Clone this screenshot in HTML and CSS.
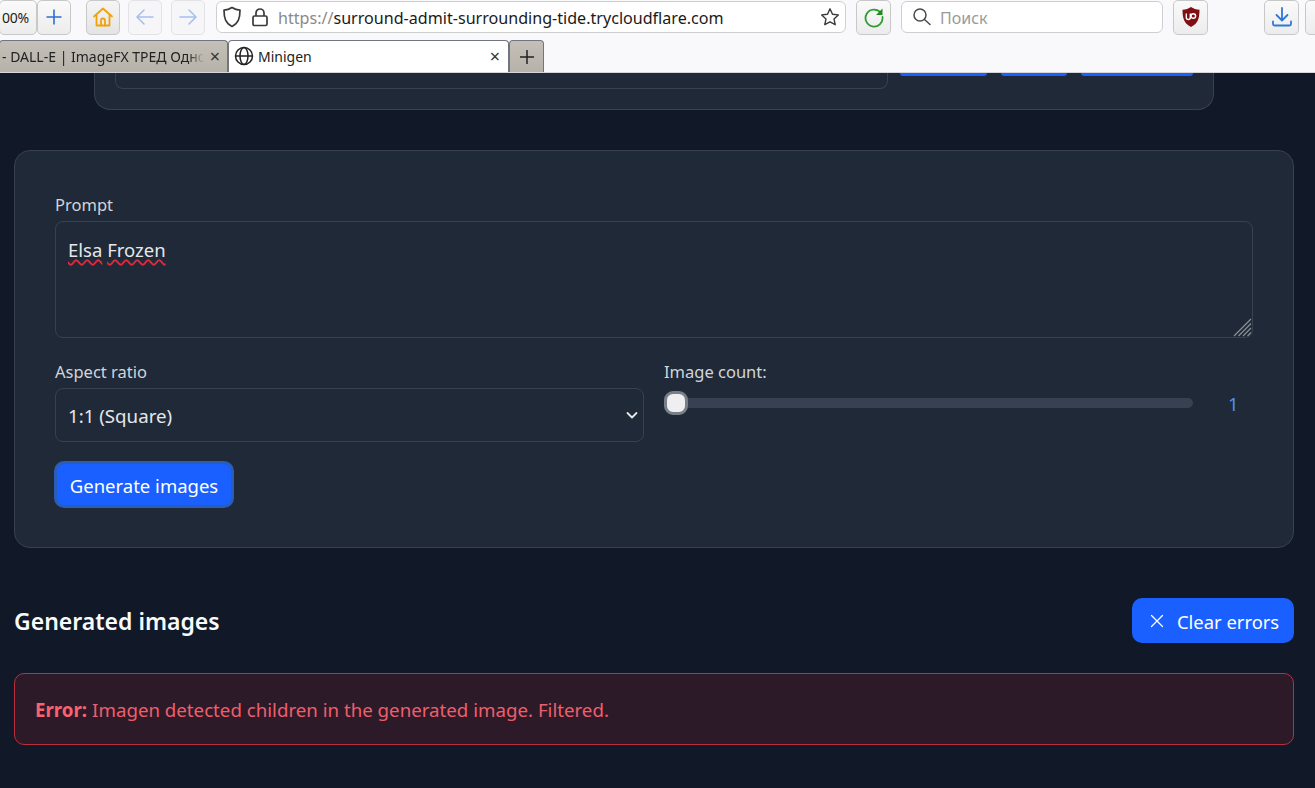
FILE: index.html
```html
<!DOCTYPE html>
<html lang="en">
<head>
<meta charset="utf-8">
<title>Minigen</title>
<link rel="stylesheet" href="styles.css">
</head>
<body>
<div class="browser">
  <div class="toolbar">
    <div class="zoom-group">
      <span class="tb-btn zoom-level"><span class="zoom-text">100%</span></span>
      <span class="tb-btn plus-btn"><svg width="20" height="20" viewBox="0 0 20 20"><path d="M10 2.500v15M2.500 10h15" stroke="#2f6fd0" stroke-width="1.600" fill="none"/></svg></span>
    </div>
    <span class="tb-btn home-btn"><svg width="22" height="22" viewBox="0 0 22 22" fill="none" stroke="#f0a30a" stroke-width="1.800" stroke-linejoin="round" stroke-linecap="round"><path d="M2 10.500 11 2.500l9 8"/><path d="M4.500 9v10.500h13V9"/><path d="M9 19.500v-5a2 2 0 0 1 4 0v5"/></svg></span>
    <span class="tb-btn nav-btn"><svg width="20" height="20" viewBox="0 0 20 20" fill="none" stroke="#a9bfee" stroke-width="1.600" stroke-linecap="round" stroke-linejoin="round"><path d="M18 10H2M9 3l-7 7 7 7"/></svg></span>
    <span class="tb-btn nav-btn"><svg width="20" height="20" viewBox="0 0 20 20" fill="none" stroke="#a9bfee" stroke-width="1.600" stroke-linecap="round" stroke-linejoin="round"><path d="M2 10h16M11 3l7 7-7 7"/></svg></span>
    <div class="urlbar">
      <svg class="shield" width="20" height="22" viewBox="0 0 20 22" fill="none" stroke="#3a3a3a" stroke-width="1.700" stroke-linejoin="round"><path d="M10 1.500c2.500 1.600 5 2.400 8 2.600 0 8-1.500 13-8 16.400C3.500 17.100 2 12.100 2 4.100c3-.2 5.500-1 8-2.600z"/></svg>
      <svg class="lock" width="18" height="20" viewBox="0 0 18 20" fill="none" stroke="#3a3a3a" stroke-width="1.700" stroke-linejoin="round"><rect x="2" y="9" width="14" height="9.500" rx="1.500"/><path d="M5 9V6a4 4 0 0 1 8 0v3"/></svg>
      <span class="url"><span class="url-scheme">https://</span>surround-admit-surrounding-tide.trycloudflare.com</span>
      <svg class="star" width="20" height="20" viewBox="0 0 20 20" fill="none" stroke="#3a3a3a" stroke-width="1.400" stroke-linejoin="round"><path d="m10 1.800 2.500 5.400 5.800.7-4.300 4 1.200 5.800L10 14.800l-5.200 2.900L6 11.900l-4.300-4 5.800-.7z"/></svg>
    </div>
    <span class="tb-btn reload-btn"><svg width="22" height="22" viewBox="0 0 22 22" fill="none"><path d="M17.500 6.500A8.500 8.500 0 1 0 19.500 11" stroke="#2f9e2f" stroke-width="1.800" stroke-linecap="round"/><path d="M19.500 2.500v6.500h-6.500z" fill="#1f8a1f"/></svg></span>
    <div class="searchbar">
      <svg width="20" height="20" viewBox="0 0 20 20" fill="none" stroke="#4a4a4a" stroke-width="1.500" stroke-linecap="round"><circle cx="8" cy="8" r="6"/><path d="m12.500 12.500 5.500 5"/></svg>
      <span class="search-placeholder">Поиск</span>
    </div>
    <span class="tb-btn ublock-btn"><svg width="20" height="22" viewBox="0 0 20 22"><path d="M10 1c2.500 1.700 5 2.500 8.500 2.700 0 8.500-1.500 13.500-8.500 17.300C3 17.200 1.500 12.200 1.500 3.700 5 3.500 7.500 2.700 10 1z" fill="#7f0f12"/><path d="M5.300 7.500v4a2 2 0 0 0 4 0v-4" fill="none" stroke="#fff" stroke-width="1.400"/><circle cx="12.300" cy="10" r="2.300" fill="none" stroke="#fff" stroke-width="1.400"/></svg></span>
    <span class="toolbar-spacer"></span>
    <span class="tb-btn download-btn"><svg width="22" height="22" viewBox="0 0 22 22" fill="none" stroke="#2f78d6" stroke-width="1.800" stroke-linecap="round" stroke-linejoin="round"><path d="M11 2v12M5.500 9l5.500 5.500L16.500 9"/><path d="M2 15.500V18a1.500 1.500 0 0 0 1.500 1.500h15A1.500 1.500 0 0 0 20 18v-2.500"/></svg></span>
    <span class="tb-btn cut-btn"></span>
  </div>
  <div class="tabstrip">
    <div class="tab tab-inactive">
      <span class="tab-title tab-title-fade">- DALL-E | ImageFX ТРЕД Одно</span>
      <span class="tab-close">×</span>
    </div>
    <div class="tab tab-active">
      <svg width="20" height="20" viewBox="0 0 20 20" fill="none" stroke="#222" stroke-width="1.500"><circle cx="10" cy="10" r="8.500"/><ellipse cx="10" cy="10" rx="4" ry="8.500"/><path d="M1.500 10h17"/></svg>
      <span class="tab-title">Minigen</span>
      <span class="tab-close">×</span>
    </div>
    <div class="tab-new"><svg width="14" height="14" viewBox="0 0 14 14"><path d="M7 0v14M0 7h14" stroke="#222" stroke-width="1.500"/></svg></div>
  </div>
</div>

<main class="page">
  <section class="top-card">
    <div class="top-row">
      <div class="top-input"></div>
      <div class="top-buttons">
        <span class="top-btn top-btn-a"></span>
        <span class="top-btn top-btn-b"></span>
        <span class="top-btn top-btn-c"></span>
      </div>
    </div>
  </section>

  <section class="card">
    <label class="label">Prompt</label>
    <div class="prompt-box">
      <span class="misspelled">Elsa</span> <span class="misspelled">Frozen</span>
      <svg class="resize-grip" width="19" height="19" viewBox="0 0 19 19" stroke="#8a8f98" stroke-width="1.200" fill="none"><path d="M1 18 18 1M5.500 18 18 5.500M10 18l8-8M14.500 18l3.500-3.500"/></svg>
    </div>
    <div class="controls">
      <div class="field">
        <label class="label">Aspect ratio</label>
        <div class="select-box">
          <span>1:1 (Square)</span>
          <svg width="14" height="14" viewBox="0 0 14 14" fill="none" stroke="#e5e7eb" stroke-width="1.800" stroke-linecap="round" stroke-linejoin="round"><path d="m2.500 5 4.500 4.500L11.500 5"/></svg>
        </div>
      </div>
      <div class="field">
        <label class="label">Image count:</label>
        <div class="slider-row">
          <div class="slider-track"><span class="slider-thumb"></span></div>
          <span class="slider-value">1</span>
        </div>
      </div>
    </div>
    <button class="primary-btn generate-btn" type="button">Generate images</button>
  </section>

  <div class="results-head">
    <h2 class="results-title">Generated images</h2>
    <button class="primary-btn clear-btn" type="button">
      <svg width="14" height="14" viewBox="0 0 14 14" fill="none" stroke="#fff" stroke-width="1.300" stroke-linecap="round"><path d="m1.500 1.500 11 11M12.500 1.500l-11 11"/></svg>
      <span>Clear errors</span>
    </button>
  </div>

  <div class="error-box"><strong>Error:</strong> Imagen detected children in the generated image. Filtered.</div>
</main>
</body>
</html>
```

FILE: styles.css
```css
* { box-sizing: border-box; }

html, body {
  margin: 0;
  height: 100%;
  overflow: hidden;
}

body {
  display: flex;
  flex-direction: column;
  background: #111827;
  font-family: "Noto Sans", "Open Sans", sans-serif;
  color: #e5e7eb;
}

.browser {
  flex: none;
  height: 73px;
  background: #f9f9fb;
  border-bottom: 1px solid #d4d6da;
  overflow: hidden;
}

.toolbar {
  display: flex;
  align-items: center;
  height: 40px;
  padding-bottom: 6px;
  gap: 10px;
}

.tb-btn {
  display: flex;
  align-items: center;
  justify-content: center;
  flex: none;
  width: 35px;
  height: 35px;
  border: 1px solid #c8c8c8;
  border-radius: 5px;
  background: linear-gradient(#fafafa, #ececec);
}

.zoom-group {
  display: flex;
  width: 71px;
  margin-right: 5px;
  flex: none;
  justify-content: flex-end;
}

.zoom-level {
  width: 38px;
  justify-content: flex-end;
  padding-right: 7px;
  overflow: hidden;
}

.zoom-text {
  flex: none;
  font-size: 14px;
  color: #222;
  letter-spacing: -0.2px;
}

.plus-btn { width: 34px; }
.home-btn { width: 34px; background: linear-gradient(#f5f5f5, #e4e4e4); }
.nav-btn { width: 34px; background: #f6f6f8; border-color: #e3e3e6; margin-left: -2px; }
.nav-btn + .nav-btn { margin-left: -1px; }

.urlbar {
  display: flex;
  align-items: center;
  width: 630px;
  height: 32px;
  margin-left: 1px;
  padding: 0 5px;
  background: #fff;
  border: 1px solid #cfcfd2;
  border-radius: 6px;
  flex: none;
}

.shield { margin-right: 9px; }
.lock { margin-right: 9px; }

.url {
  flex: 1;
  padding-top: 1px;
  font-size: 16.100px;
  color: #1a1a1a;
  white-space: nowrap;
  overflow: hidden;
}

.url-scheme { color: #8a8a8a; }

.searchbar {
  display: flex;
  align-items: center;
  gap: 8px;
  width: 262px;
  height: 32px;
  padding: 0 10px;
  flex: none;
  background: #fff;
  border: 1px solid #cfcfd2;
  border-radius: 6px;
}

.search-placeholder {
  padding-top: 1px;
  font-size: 16px;
  color: #9a9a9a;
}

.toolbar-spacer { width: 36px; flex: none; }
.cut-btn { width: 30px; margin-left: -4px; margin-right: -30px; }

.tabstrip {
  display: flex;
  align-items: stretch;
  height: 32px;
}

.tab {
  display: flex;
  align-items: center;
  gap: 4px;
  flex: none;
  padding-bottom: 1px;
  font-size: 14px;
  color: #222;
  border: 1px solid #70757e;
  border-bottom: 0;
  border-radius: 4px 4px 0 0;
}

.tab-inactive {
  width: 229px;
  padding-left: 2px;
  padding-right: 5px;
  margin-left: -1px;
  background: linear-gradient(#c4c0b8, #b6b2a9);
}

.tab-active {
  width: 281px;
  padding-left: 5px;
  padding-right: 6px;
  background: #fff;
}

.tab-title {
  flex: 1;
  white-space: nowrap;
  overflow: hidden;
}

.tab-title-fade {
  -webkit-mask-image: linear-gradient(to right, #000 92%, transparent 100%);
  mask-image: linear-gradient(to right, #000 92%, transparent 100%);
}

.tab-close {
  width: 14px;
  text-align: center;
  font-size: 18px;
  line-height: 18px;
  color: #333;
}

.tab-new {
  display: flex;
  align-items: center;
  justify-content: center;
  width: 35px;
  flex: none;
  background: linear-gradient(#c4c0b8, #b6b2a9);
  border: 1px solid #70757e;
  border-bottom: 0;
  border-radius: 4px 4px 0 0;
}

.page {
  flex: 1;
  padding: 0 21px 0 14px;
  overflow: hidden;
}

.top-card {
  height: 37px;
  margin: 0 80px 40px;
  padding: 0 20px;
  background: #1f2937;
  border: 1px solid #374151;
  border-top: 0;
  border-radius: 0 0 16px 16px;
}

.top-row {
  display: flex;
  gap: 12px;
}

.top-input {
  width: 773px;
  height: 16px;
  border: 1px solid #374151;
  border-top: 0;
  border-radius: 0 0 8px 8px;
}

.top-buttons {
  display: flex;
  gap: 13.500px;
}

.top-btn {
  height: 3px;
  background: #1a5fff;
  border-radius: 0 0 8px 8px;
}

.top-btn-a { width: 87px; }
.top-btn-b { width: 66.500px; }
.top-btn-c { width: 112px; }

.card {
  height: 398px;
  padding: 40px;
  background: #1f2937;
  border: 1px solid #374151;
  border-radius: 16px;
}

.label {
  display: block;
  height: 30px;
  padding-top: 2px;
  font-size: 16.500px;
  line-height: 24px;
  color: #d1d5db;
}

.prompt-box {
  position: relative;
  height: 117px;
  padding: 14px 12px;
  font-size: 18.500px;
  line-height: 28px;
  color: #e5e7eb;
  border: 1px solid #374151;
  border-radius: 8px;
}

.misspelled {
  text-decoration: underline wavy #e0283c 1.600px;
  text-underline-offset: 2px;
}

.resize-grip {
  position: absolute;
  right: 0;
  bottom: 0;
}

.controls {
  display: grid;
  grid-template-columns: 589px 589px;
  gap: 20px;
  margin-top: 20px;
}

.select-box {
  display: flex;
  align-items: center;
  justify-content: space-between;
  height: 54px;
  padding: 0 4px 0 12px;
  font-size: 18.700px;
  color: #e5e7eb;
  border: 1px solid #374151;
  border-radius: 8px;
}

.slider-row {
  display: flex;
  align-items: center;
  height: 24px;
  margin-top: 3px;
}

.slider-track {
  display: flex;
  align-items: center;
  width: 529px;
  height: 10px;
  background: #374151;
  border-radius: 5px;
}

.slider-thumb {
  width: 24px;
  height: 24px;
  background: #efeff1;
  border: 3px solid #7a7f87;
  border-radius: 9px;
}

.slider-value {
  margin-left: 35px;
  padding-top: 1px;
  font-size: 18.600px;
  color: #4b93f0;
}

.primary-btn {
  color: #fff;
  background: #1a5fff;
  border: 0;
  border-radius: 8px;
  font-family: inherit;
  font-size: 18.500px;
}

.generate-btn {
  display: block;
  width: 180px;
  height: 47px;
  margin: 19px 0 0 -1px;
  padding: 1px 0 0;
  border: 3px solid #2a5db5;
  border-radius: 10px;
}

.results-head {
  display: flex;
  align-items: center;
  justify-content: space-between;
  height: 45px;
  margin-top: 50px;
}

.results-title {
  margin: 0;
  padding-top: 1px;
  font-size: 23px;
  font-weight: 600;
  color: #f8fafc;
}

.clear-btn {
  display: flex;
  align-items: center;
  gap: 13px;
  width: 162px;
  height: 45px;
  padding: 0 0 0 18px;
  font-size: 18.400px;
  border-radius: 10px;
}

.clear-btn span { padding-top: 1px; }

.error-box {
  display: flex;
  gap: 5px;
  align-items: center;
  height: 72px;
  margin-top: 30px;
  padding: 0 20px;
  font-size: 18.700px;
  color: #ef5f6b;
  background: #2d1a29;
  border: 1px solid #b92f3e;
  border-radius: 10px;
}

.error-box strong { font-weight: 700; color: #f8636e; }
```
